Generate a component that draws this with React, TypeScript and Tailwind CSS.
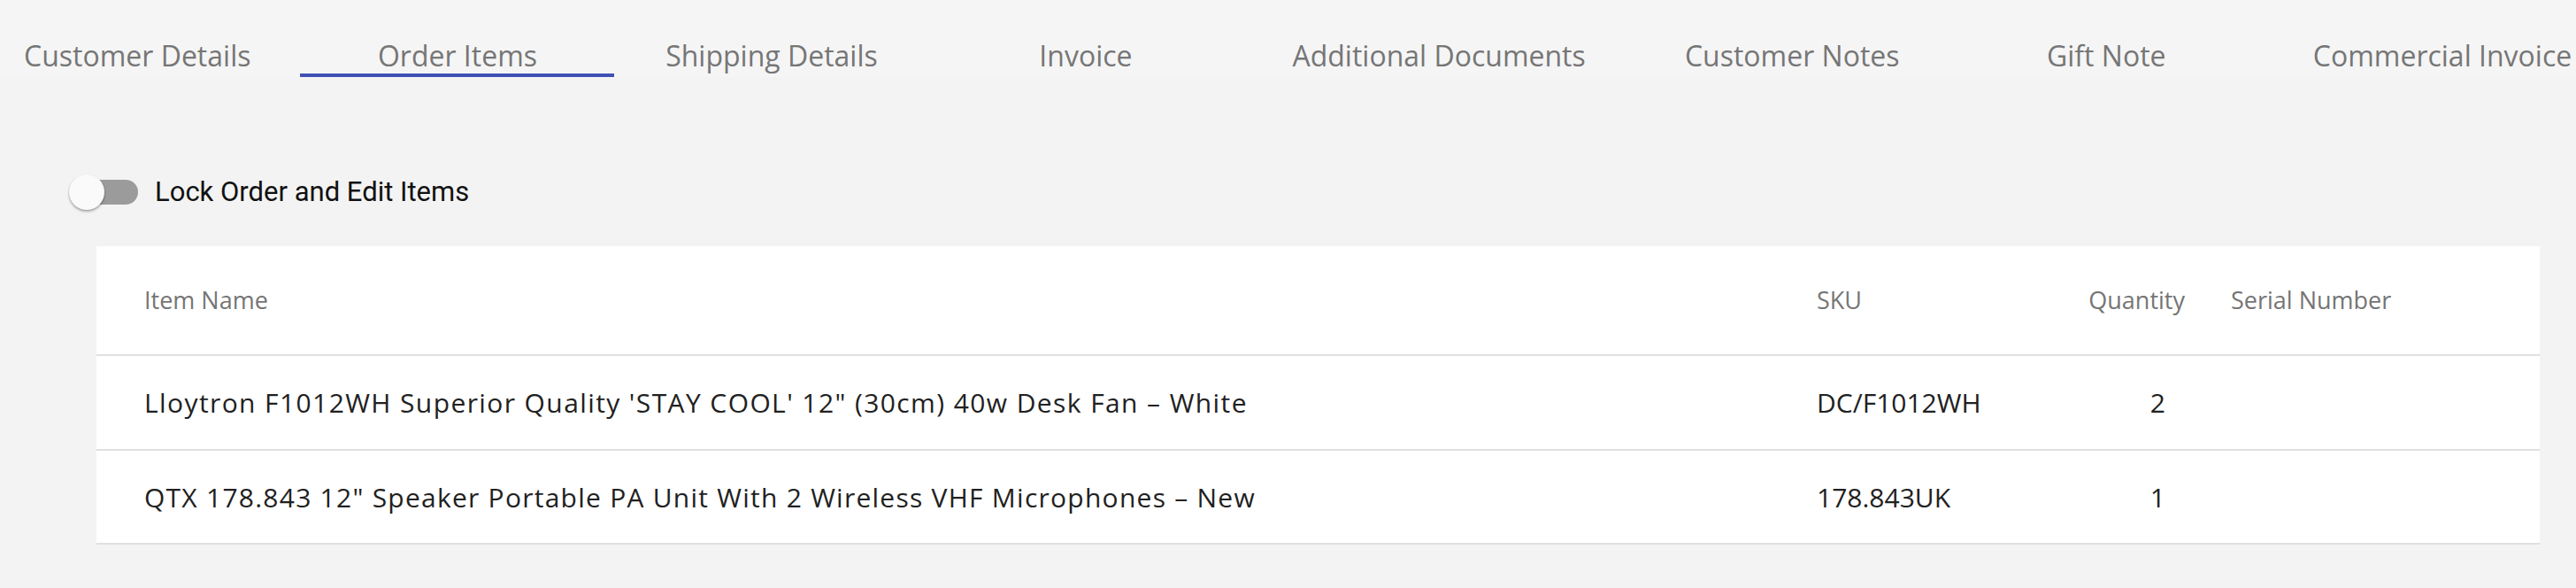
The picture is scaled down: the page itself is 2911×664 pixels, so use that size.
import React from "react";

const tabs = [
  "Customer Details",
  "Order Items",
  "Shipping Details",
  "Invoice",
  "Additional Documents",
  "Customer Notes",
  "Gift Note",
  "Commercial Invoice",
];

const rows = [
  {
    name: "Lloytron F1012WH Superior Quality 'STAY COOL' 12\" (30cm) 40w Desk Fan – White",
    sku: "DC/F1012WH",
    qty: "2",
  },
  {
    name: "QTX 178.843 12\" Speaker Portable PA Unit With 2 Wireless VHF Microphones – New",
    sku: "178.843UK",
    qty: "1",
  },
];

export default function App() {
  return (
    <div className="w-[2911px] h-[664px] overflow-hidden bg-[#f3f3f3] font-['Open_Sans',sans-serif]">
      {/* Tabs */}
      <div className="h-[87px] bg-[#f5f5f5] overflow-hidden">
        <div className="flex -ml-[29px] h-[87px]">
          {tabs.map((t, i) => (
            <div
              key={t}
              className="relative shrink-0 min-w-[355px] px-[56px] h-[87px] pt-[41px] text-center"
            >
              <span className="block whitespace-nowrap text-[32px] leading-[44px] text-[#767676]">
                {t}
              </span>
              {i === 1 && (
                <div className="absolute left-0 right-0 bottom-0 h-[4px] bg-[#3f51b5]" />
              )}
            </div>
          ))}
        </div>
      </div>

      {/* Toggle */}
      <div className="flex items-center mt-[110px] h-[40px] pl-[78px]">
        <div className="relative w-[78px] h-[40px] shrink-0">
          <div className="absolute left-[10px] top-[6px] w-[68px] h-[28px] rounded-full bg-[#9b9b9b]" />
          <div className="absolute left-0 top-0 w-[40px] h-[40px] rounded-full bg-[#fafafa] shadow-[0_2px_3px_rgba(0,0,0,0.25),0_1px_2px_rgba(0,0,0,0.15)]" />
        </div>
        <span className="ml-[19px] text-[31px] leading-[40px] text-[#111111] font-['Roboto',sans-serif]">
          Lock Order and Edit Items
        </span>
      </div>

      {/* Table */}
      <div className="mt-[41px] ml-[109px] w-[2761px] bg-white">
        <div className="grid grid-cols-[1916px_305px_163px_1fr] h-[124px] border-b-2 border-[#e0e0e0] items-center text-[27px] text-[#757575]">
          <div className="pl-[54px]">Item Name</div>
          <div className="pl-[28px]">SKU</div>
          <div className="text-right pr-[24px]">Quantity</div>
          <div className="pl-[28px]">Serial Number</div>
        </div>
        {rows.map((r, i) => (
          <div
            key={r.sku}
            className={`grid grid-cols-[1916px_305px_163px_1fr] ${i === 0 ? "h-[107px]" : "h-[106px]"} border-b-2 border-[#e0e0e0] items-center text-[30px] text-[#212121]`}
          >
            <div className={`pl-[54px] whitespace-nowrap ${i === 0 ? "tracking-[1.4px]" : "tracking-[1.25px]"}`}>{r.name}</div>
            <div className="pl-[28px] whitespace-nowrap">{r.sku}</div>
            <div className="text-right pr-[46px]">{r.qty}</div>
            <div className="pl-[28px]"></div>
          </div>
        ))}
      </div>
    </div>
  );
}
